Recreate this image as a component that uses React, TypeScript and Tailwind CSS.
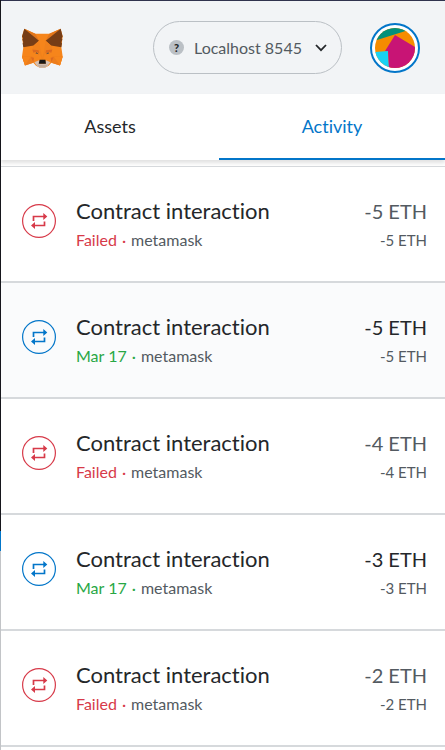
import { useState } from "react";

type Activity = { status: "failed" | "confirmed"; amount: string; highlighted?: boolean };

const activities: Activity[] = [
  { status: "failed", amount: "-5 ETH" },
  { status: "confirmed", amount: "-5 ETH", highlighted: true },
  { status: "failed", amount: "-4 ETH" },
  { status: "confirmed", amount: "-3 ETH" },
  { status: "failed", amount: "-2 ETH" },
];

function Fox() {
  return (
    <svg viewBox="0 0 123 117" className="h-10 w-[41px]" aria-label="MetaMask" role="img">
      <path fill="#f6851b" d="M7 1 40 16H82L116 1 122 24 118 56 122 84 114 111 88 103 80 112 70 117H52L42 112 34 103 9 111 0 84 4 56 0 24Z" />
      <path fill="#e2761b" d="M7 1 40 16 51 37ZM116 1 82 16 71 37Z" />
      <path fill="#ed7d1c" d="M0 84H31L34 103 9 111ZM122 84H91L88 103 114 111Z" />
      <path fill="#f6851b" d="M0 84 26 85 9 111ZM122 84 96 85 114 111Z" />
      <path fill="#763d16" d="M7 1 51 37 35 51 4 56 2 45 4 41 1 33 3 29 0 24ZM116 1 71 37 87 51 118 56 120 45 118 41 121 33 119 29 122 24Z" />
      <path fill="#f0811c" d="M51 37 35 51 31 63 50 65 57 84 59 94H63L65 84 72 65 91 63 87 51 71 37 66 68 61 88 56 68Z" />
      <path fill="#dc6a20" d="M31 63 50 65 52 75 44 70 34 73ZM91 63 72 65 70 75 78 70 88 73ZM27 86 36 88 34 101ZM95 86 86 88 88 101Z" />
      <path fill="#56473f" d="M40 74 44 71 50 77ZM82 74 78 71 72 77Z" />
      <path fill="#d7c1b3" d="M37 101 51 95 54 106H69L72 95 85 101 76 113 69 117H53L46 113Z" />
      <path fill="#c0ad9e" d="M44 108 54 109H69L79 108 69 117H53Z" />
      <path fill="#161616" d="M53 94H70L72 106H50Z" />
    </svg>
  );
}

function AccountArt() {
  return (
    <svg viewBox="0 0 40 40" className="size-10 rounded-full" aria-hidden="true">
      <path fill="#f58c00" d="M0 0H40V40H0Z" />
      <path fill="#03907a" d="M0 0H40L2 12H0Z" />
      <path fill="#19d2f2" d="M0 24 13 23 14 40H0Z" />
      <path fill="#c81475" d="M20 7 40 19V40H14L13 23H10Z" />
    </svg>
  );
}

function InteractionIcon() {
  return (
    <svg viewBox="0 0 34 34" className="size-[34px] shrink-0" fill="none" aria-hidden="true">
      <circle cx="17" cy="17" r="16.4" stroke="currentColor" strokeWidth="1.2" />
      <path d="M11.5 17V12.5H22M22.5 17.5V21.5H12.5" stroke="currentColor" strokeWidth="1.7" />
      <path d="M21.3 9 25.3 12.5 21.3 16ZM13 18 9 21.5 13 25Z" fill="currentColor" />
    </svg>
  );
}

function ActivityRow({ status, amount, highlighted }: Activity) {
  const failed = status === "failed";
  const tone = failed ? "text-[#d73a49]" : "text-[#28a745]";
  return (
    <li className={`flex h-[116px] items-start border-b-2 border-[#d6d9dc] pr-[18px] pl-[21px] ${highlighted ? "bg-[#fafbfc]" : "bg-white"}`}>
      <div className={`mt-[37px] ${failed ? "text-[#d73a49]" : "text-[#0376c9]"}`}>
        <InteractionIcon />
      </div>
      <div className="mt-[29px] ml-5 flex-1">
        <h2 className="text-[22px] leading-[30px] text-[#24272a]">Contract interaction</h2>
        <p className="flex gap-[5px] text-[16px] leading-7 text-[#535a61]">
          <span className={tone}>{failed ? "Failed" : "Mar 17"}</span>
          <span className={tone}>·</span>
          <span>metamask</span>
        </p>
      </div>
      <div className="mt-[29px] text-right">
        <p className={`text-[20px] leading-[30px] ${failed ? "text-[#535a61]" : "text-[#24272a]"}`}>{amount}</p>
        <p className="text-[15px] leading-7 text-[#535a61]">{amount}</p>
      </div>
    </li>
  );
}

export default function App() {
  const [tab, setTab] = useState("Activity");
  return (
    <div className="flex min-h-screen bg-white font-['Lato','Open_Sans',sans-serif] [font-variant-ligatures:none]">
      <div className="w-px shrink-0 bg-[linear-gradient(#16161c_0_531px,#0376c9_531px_551px,#c2c4c7_551px)]" />
      <div className="min-w-0 flex-1">
        <header className="flex h-[94px] items-center justify-between border-t border-[#30334e] bg-[#f2f4f6] pr-[25px] pl-[21px]">
          <Fox />
          <div className="flex items-center gap-7">
            <div className="relative flex h-[53px] w-[189px] items-center rounded-full border border-[#bbc0c5] pl-[15px]">
              <span aria-hidden="true" className="flex size-[15px] shrink-0 items-center justify-center rounded-full bg-[#bbc0c5] text-[11px] leading-[15px] font-black text-[#24272a]">?</span>
              <select aria-label="Network" className="h-full min-w-0 flex-1 appearance-none rounded-r-full bg-transparent pl-[10px] text-[16px] text-[#535a61]">
                <option>Localhost 8545</option>
              </select>
              <svg viewBox="0 0 12 8" className="pointer-events-none absolute right-[14px] h-2 w-3" fill="none" aria-hidden="true">
                <path d="M1 1 6 6.2 11 1" stroke="#24272a" strokeWidth="1.8" />
              </svg>
            </div>
            <button aria-label="Account" className="flex size-[50px] items-center justify-center rounded-full border-2 border-[#0376c9] bg-white">
              <AccountArt />
            </button>
          </div>
        </header>
        <nav className="grid h-[66px] grid-cols-[109fr_113fr] shadow-[0_3px_4px_rgba(0,0,0,0.12)]" role="tablist">
          {["Assets", "Activity"].map((name) => (
            <button
              key={name}
              role="tab"
              aria-selected={tab === name}
              onClick={() => setTab(name)}
              className={`border-b-2 text-[18px] ${tab === name ? "border-[#0376c9] text-[#0376c9]" : "border-transparent text-[#24272a]"}`}
            >
              {name}
            </button>
          ))}
        </nav>
        <ul className="mt-[6px] border-t border-[#d6d9dc]">
          {activities.map((activity, i) => (
            <ActivityRow key={i} {...activity} />
          ))}
        </ul>
      </div>
    </div>
  );
}
